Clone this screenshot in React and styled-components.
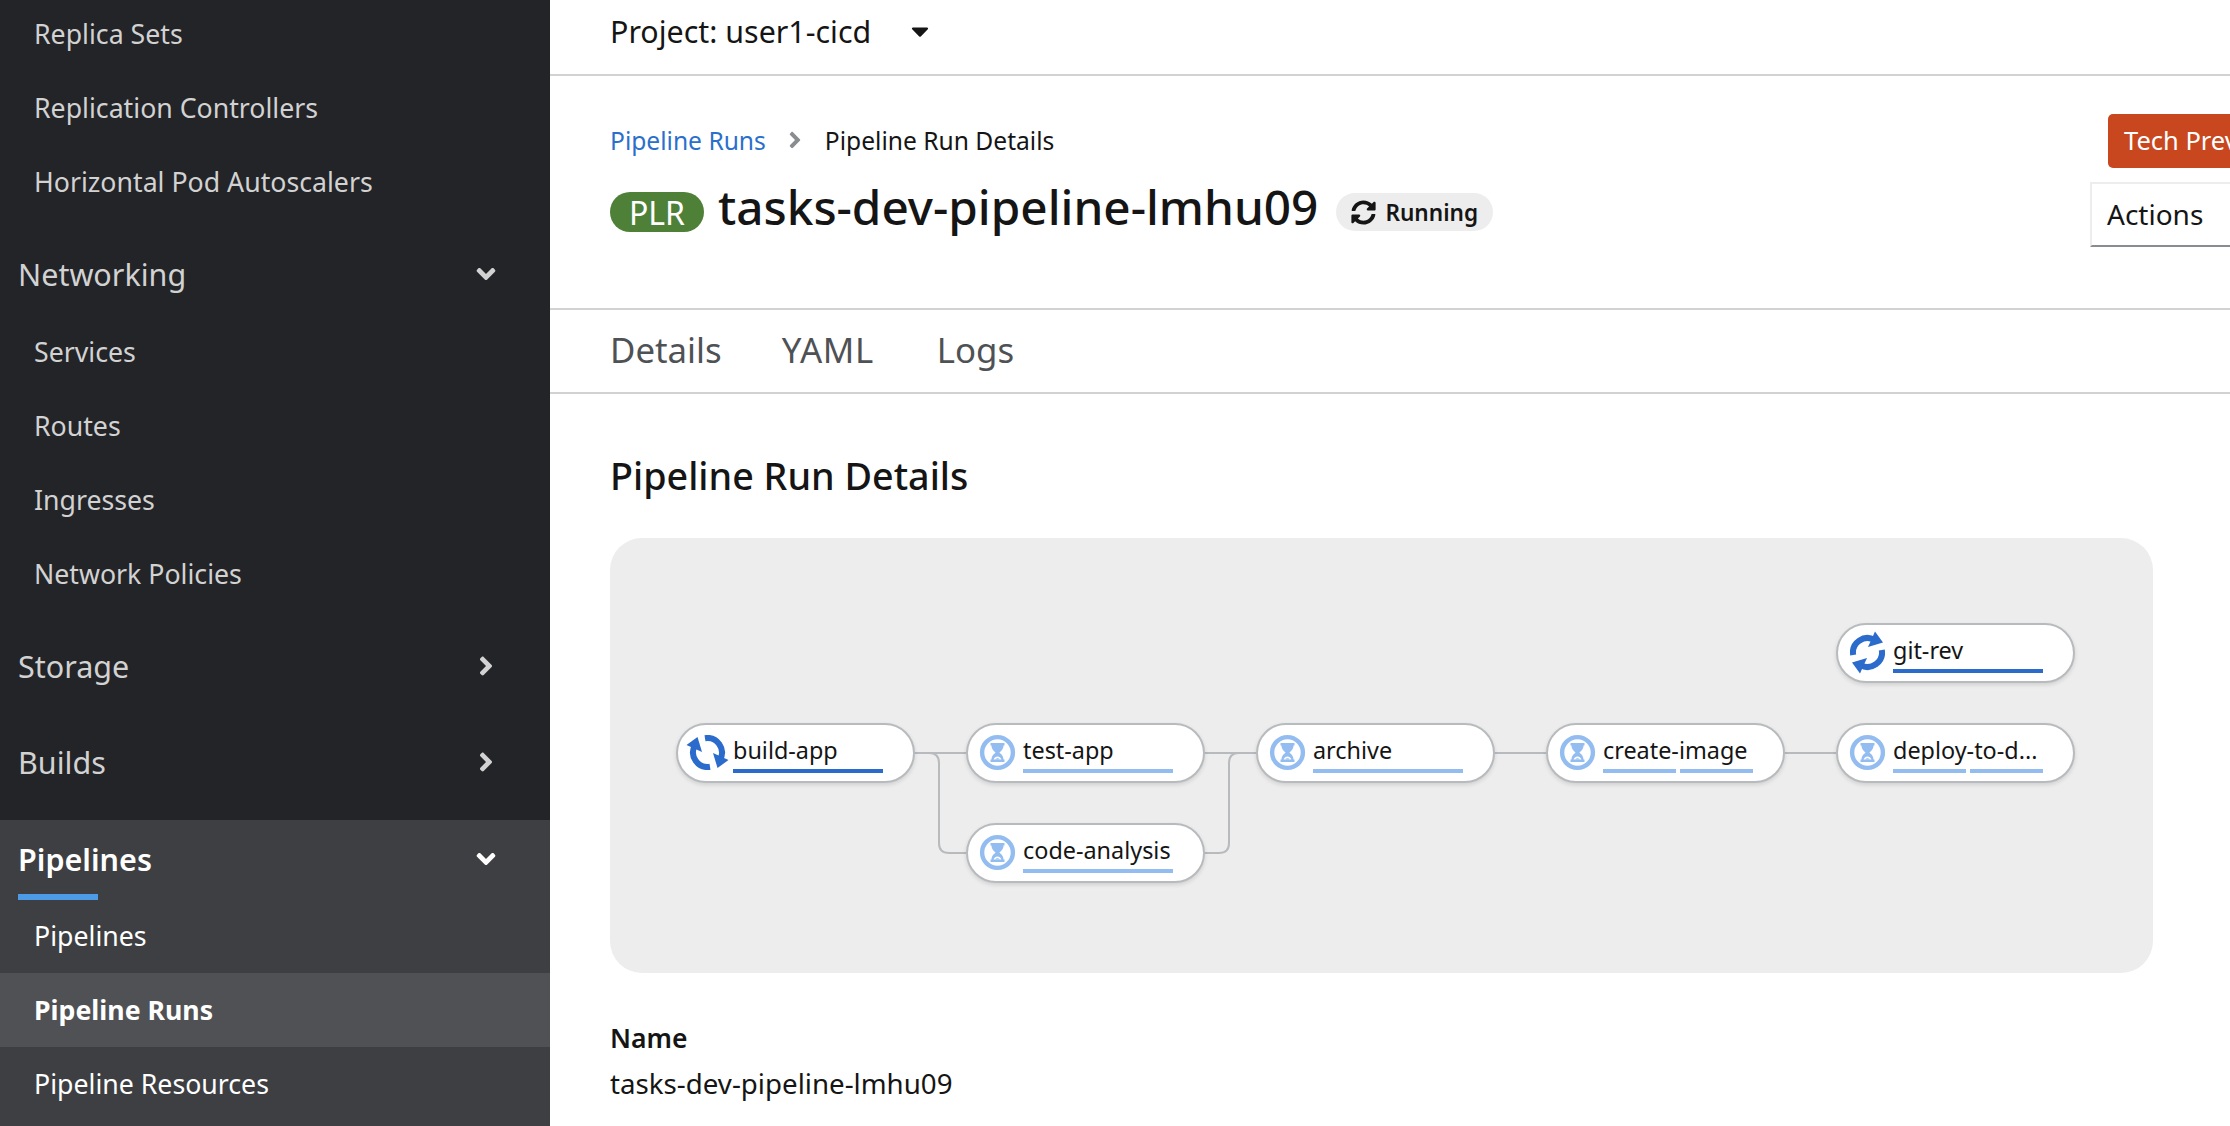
import React from 'react';
import styled, { createGlobalStyle } from 'styled-components';
import { FaAngleDown, FaAngleRight, FaCaretDown, FaSyncAlt } from 'react-icons/fa';

const FONT = '"Noto Sans", "Liberation Sans", sans-serif';

const Global = createGlobalStyle`
  html, body { margin: 0; padding: 0; background: #fff; overflow: hidden; }
  body { font-family: ${FONT}; }
`;

const Page = styled.div`
  display: flex;
  width: 2230px;
  height: 1126px;
  overflow: hidden;
`;

const Sidebar = styled.nav`
  flex: 0 0 550px;
  background: #232428;
  color: #d2d2d2;
  display: flex;
  flex-direction: column;
  margin-top: -3px;
  height: 1129px;
  overflow: hidden;
`;

const NavItem = styled.div`
  height: 74px;
  box-sizing: border-box;
  padding: 0 0 2px 34px;
  display: flex;
  align-items: center;
  font-size: 26.7px;
  background: ${p => (p.$current ? '#505155' : 'transparent')};
  color: ${p => (p.$light ? '#fff' : '#d2d2d2')};
  font-weight: ${p => (p.$current ? 700 : 400)};
`;

const NavHeader = styled.div`
  height: ${p => p.$h}px;
  margin-top: ${p => p.$mt || 0}px;
  padding: ${p => p.$pt || 0}px 53px ${p => p.$pb || 0}px 18px;
  box-sizing: border-box;
  display: flex;
  align-items: center;
  justify-content: space-between;
  font-size: 30.5px;
  position: relative;
  font-weight: ${p => (p.$active ? 600 : 400)};
  color: ${p => (p.$active ? '#fff' : '#d2d2d2')};
  svg { font-size: 30px; margin-right: -4px; }
`;

const ActiveBar = styled.span`
  position: absolute;
  left: 18px;
  bottom: -1px;
  width: 80px;
  height: 6px;
  background: #4d9ae6;
`;

const ActiveGroup = styled.div`
  background: #3e3f43;
  margin-top: 9px;
  flex: 1;
`;

const Main = styled.main`
  flex: 1;
  min-width: 0;
  display: flex;
  flex-direction: column;
  color: #151515;
`;

const TopBar = styled.div`
  height: 62px;
  border-bottom: 2px solid #d2d2d2;
  padding: 0 0 12px 60px;
  display: flex;
  align-items: center;
  gap: 35px;
  font-size: 30.4px;
  svg { font-size: 28px; }
`;

const Header = styled.header`
  height: 234px;
  box-sizing: border-box;
  border-bottom: 2px solid #d2d2d2;
  padding: 38px 0 0 60px;
  display: flex;
  justify-content: space-between;
`;

const Breadcrumbs = styled.div`
  display: flex;
  align-items: center;
  height: 54px;
  box-sizing: border-box;
  padding-bottom: 2px;
  font-size: 24.6px;
  color: #151515;
`;

const Crumb = styled.a`
  color: #2b6fcc;
`;

const CrumbSep = styled.span`
  display: flex;
  margin: 0 16.5px;
  color: #8a8d90;
  font-size: 26px;
`;

const TitleRow = styled.div`
  display: flex;
  align-items: center;
  margin-top: 11px;
  height: 56px;
`;

const Badge = styled.span`
  width: 94px;
  height: 40px;
  margin-top: 10px;
  border-radius: 20px;
  background: #4e8038;
  color: #fff;
  font-size: 32px;
  display: flex;
  align-items: center;
  justify-content: center;
`;

const Title = styled.h1`
  margin: 0 18px 2px 14px;
  font-size: 47.7px;
  font-weight: 500;
  white-space: nowrap;
`;

const StatusPill = styled.span`
  display: flex;
  align-items: center;
  gap: 9px;
  height: 38px;
  margin-top: 10px;
  padding: 0 15px;
  border-radius: 19px;
  background: #ededed;
  font-size: 22.6px;
  font-weight: 600;
  svg { font-size: 25px; }
`;

const HeaderActions = styled.div`
  flex: 0 0 140px;
  display: flex;
  flex-direction: column;
  align-items: flex-start;
  min-width: 0;
`;

const TechPreview = styled.div`
  margin-left: 18px;
  height: 54px;
  padding: 0 0 2px 16px;
  box-sizing: border-box;
  width: 230px;
  display: flex;
  align-items: center;
  border-radius: 5px;
  background: #c9471f;
  color: #fff;
  font-size: 25.5px;
  white-space: nowrap;
  flex-shrink: 0;
`;

const ActionsBtn = styled.div`
  margin-top: 14px;
  width: 200px;
  height: 65px;
  box-sizing: border-box;
  flex-shrink: 0;
  padding: 0 0 2px 15px;
  display: flex;
  align-items: center;
  font-size: 28px;
  border: 2px solid #ededed;
  border-bottom: 2px solid #8a8d90;
`;

const Tabs = styled.div`
  height: 84px;
  box-sizing: border-box;
  border-bottom: 2px solid #d2d2d2;
  padding: 0 0 4px 60px;
  display: flex;
  align-items: center;
  gap: 60px;
  font-size: 34.8px;
  color: #4f5255;
`;

const Tab = styled.span`
  min-width: ${p => p.$w}px;
  letter-spacing: ${p => p.$ls || 0}px;
`;

const Body = styled.section`
  padding: 0 0 0 60px;
`;

const SectionTitle = styled.h2`
  margin: 58px 0 38px;
  font-size: 37.7px;
  line-height: 48px;
  font-weight: 500;
`;

const Graph = styled.div`
  position: relative;
  width: 1543px;
  height: 435px;
  border-radius: 32px;
  background: #ededed;
`;

const Wires = styled.svg`
  position: absolute;
  inset: 0;
`;

const Node = styled.div`
  position: absolute;
  left: ${p => p.$x}px;
  top: ${p => p.$y}px;
  width: 239px;
  height: 60px;
  box-sizing: border-box;
  background: #fff;
  border: 2px solid #b8bbbe;
  border-radius: 30px;
  box-shadow: 0 2px 4px rgba(0, 0, 0, 0.12);
`;

const NodeIcon = styled.span`
  position: absolute;
  left: 11px;
  top: 9px;
  width: 37px;
  height: 37px;
  display: flex;
  align-items: center;
  justify-content: center;
  svg { flex-shrink: 0; }
`;

const NodeLabel = styled.span`
  position: absolute;
  left: 55px;
  top: 9px;
  font-size: 23.4px;
  line-height: 32px;
  color: #151515;
  white-space: nowrap;
`;

const Bars = styled.div`
  position: absolute;
  left: 55px;
  width: 150px;
  top: 44px;
  display: flex;
  gap: 4px;
`;

const Bar = styled.span`
  flex: 1;
  height: 4px;
  background: ${p => (p.$running ? '#2a6bcb' : '#93bdf0')};
`;

const Field = styled.dl`
  margin: 47px 0 0;
`;

const FieldName = styled.dt`
  font-size: 26.5px;
  line-height: 36px;
  font-weight: 600;
`;

const FieldValue = styled.dd`
  margin: 9px 0 0;
  font-size: 27.7px;
  line-height: 36px;
`;

const Hourglass = () => (
  <svg width="37" height="37" viewBox="0 0 37 37">
    <circle cx="18.5" cy="18.5" r="15.4" fill="none" stroke="#93bdf0" strokeWidth="4.4" />
    <path
      fill="#93bdf0"
      d="M11.5 9h14v2.4h-1c0 4-2.7 5.6-4.1 7.1 1.4 1.5 4.1 3.1 4.1 7.1h1V28h-14v-2.4h1c0-4 2.7-5.6 4.1-7.1-1.4-1.5-4.1-3.1-4.1-7.1h-1z"
    />
    <path fill="#fff" d="M14.6 25.6c.3-1.8 2-3.2 3.9-3.2s3.6 1.4 3.9 3.2z" />
    <path fill="#93bdf0" d="M16.2 25.6c.4-.8 1.3-1.4 2.3-1.4s1.9.6 2.3 1.4z" />
  </svg>
);

const Half = () => (
  <>
    <path d="M3.2 24A14.5 14.5 0 0 1 24.7 9" fill="none" stroke="#2a6bcb" strokeWidth="6" />
    <path d="M25 .5 33 11.5 18 16z" fill="#2a6bcb" />
  </>
);

const SyncGlyph = ({ rot }) => (
  <svg width="35" height="43" viewBox="0 0 35 43" style={{ transform: `rotate(${rot}deg)` }}>
    <Half />
    <g transform="rotate(180 17.5 21.5)">
      <Half />
    </g>
  </svg>
);

const nodes = [
  { name: 'build-app', x: 66, y: 185, running: true, rot: 90, segs: 1 },
  { name: 'test-app', x: 356, y: 185, segs: 1 },
  { name: 'code-analysis', x: 356, y: 285, segs: 1 },
  { name: 'archive', x: 646, y: 185, segs: 1 },
  { name: 'create-image', x: 936, y: 185, segs: 2 },
  { name: 'git-rev', x: 1226, y: 85, running: true, rot: 0, segs: 1 },
  { name: 'deploy-to-d...', x: 1226, y: 185, segs: 2 },
];

const wires = [
  'M304 215H356',
  'M304 215H319q10 0 10 10V305q0 10 10 10H356',
  'M594 215H646',
  'M594 315H609q10 0 10-10V225q0-10 10-10H646',
  'M884 215H936',
  'M1174 215H1226',
];

export default function App() {
  return (
    <Page>
      <Global />
      <Sidebar>
        <NavItem>Replica Sets</NavItem>
        <NavItem>Replication Controllers</NavItem>
        <NavItem>Horizontal Pod Autoscalers</NavItem>
        <NavHeader $h={88} $mt={8} $pt={5}>Networking<FaAngleDown /></NavHeader>
        <NavItem>Services</NavItem>
        <NavItem>Routes</NavItem>
        <NavItem>Ingresses</NavItem>
        <NavItem>Network Policies</NavItem>
        <NavHeader $h={96} $mt={8} $pb={3}>Storage<FaAngleRight /></NavHeader>
        <NavHeader $h={96} $pb={3}>Builds<FaAngleRight /></NavHeader>
        <ActiveGroup>
          <NavHeader $h={79} $pb={2} $active>
            Pipelines<FaAngleDown />
            <ActiveBar />
          </NavHeader>
          <NavItem $light>Pipelines</NavItem>
          <NavItem $light $current>Pipeline Runs</NavItem>
          <NavItem $light>Pipeline Resources</NavItem>
        </ActiveGroup>
      </Sidebar>
      <Main>
        <TopBar>
          <span>Project: user1-cicd</span>
          <FaCaretDown />
        </TopBar>
        <Header>
          <div>
            <Breadcrumbs>
              <Crumb>Pipeline Runs</Crumb>
              <CrumbSep><FaAngleRight /></CrumbSep>
              <span>Pipeline Run Details</span>
            </Breadcrumbs>
            <TitleRow>
              <Badge>PLR</Badge>
              <Title>tasks-dev-pipeline-lmhu09</Title>
              <StatusPill><FaSyncAlt />Running</StatusPill>
            </TitleRow>
          </div>
          <HeaderActions>
            <TechPreview>Tech Preview</TechPreview>
            <ActionsBtn>Actions</ActionsBtn>
          </HeaderActions>
        </Header>
        <Tabs>
          <Tab $w={111}>Details</Tab>
          <Tab $w={95} $ls={0.6}>YAML</Tab>
          <Tab $w={80}>Logs</Tab>
        </Tabs>
        <Body>
          <SectionTitle>Pipeline Run Details</SectionTitle>
          <Graph>
            <Wires width="1543" height="435" fill="none" stroke="#b8bbbe" strokeWidth="2">
              {wires.map(d => <path key={d} d={d} />)}
            </Wires>
            {nodes.map(n => (
              <Node key={n.name} $x={n.x} $y={n.y}>
                <NodeIcon>
                  {n.running ? <SyncGlyph rot={n.rot} /> : <Hourglass />}
                </NodeIcon>
                <NodeLabel>{n.name}</NodeLabel>
                <Bars>
                  {Array.from({ length: n.segs }, (_, i) => <Bar key={i} $running={n.running} />)}
                </Bars>
              </Node>
            ))}
          </Graph>
          <Field>
            <FieldName>Name</FieldName>
            <FieldValue>tasks-dev-pipeline-lmhu09</FieldValue>
          </Field>
        </Body>
      </Main>
    </Page>
  );
}
